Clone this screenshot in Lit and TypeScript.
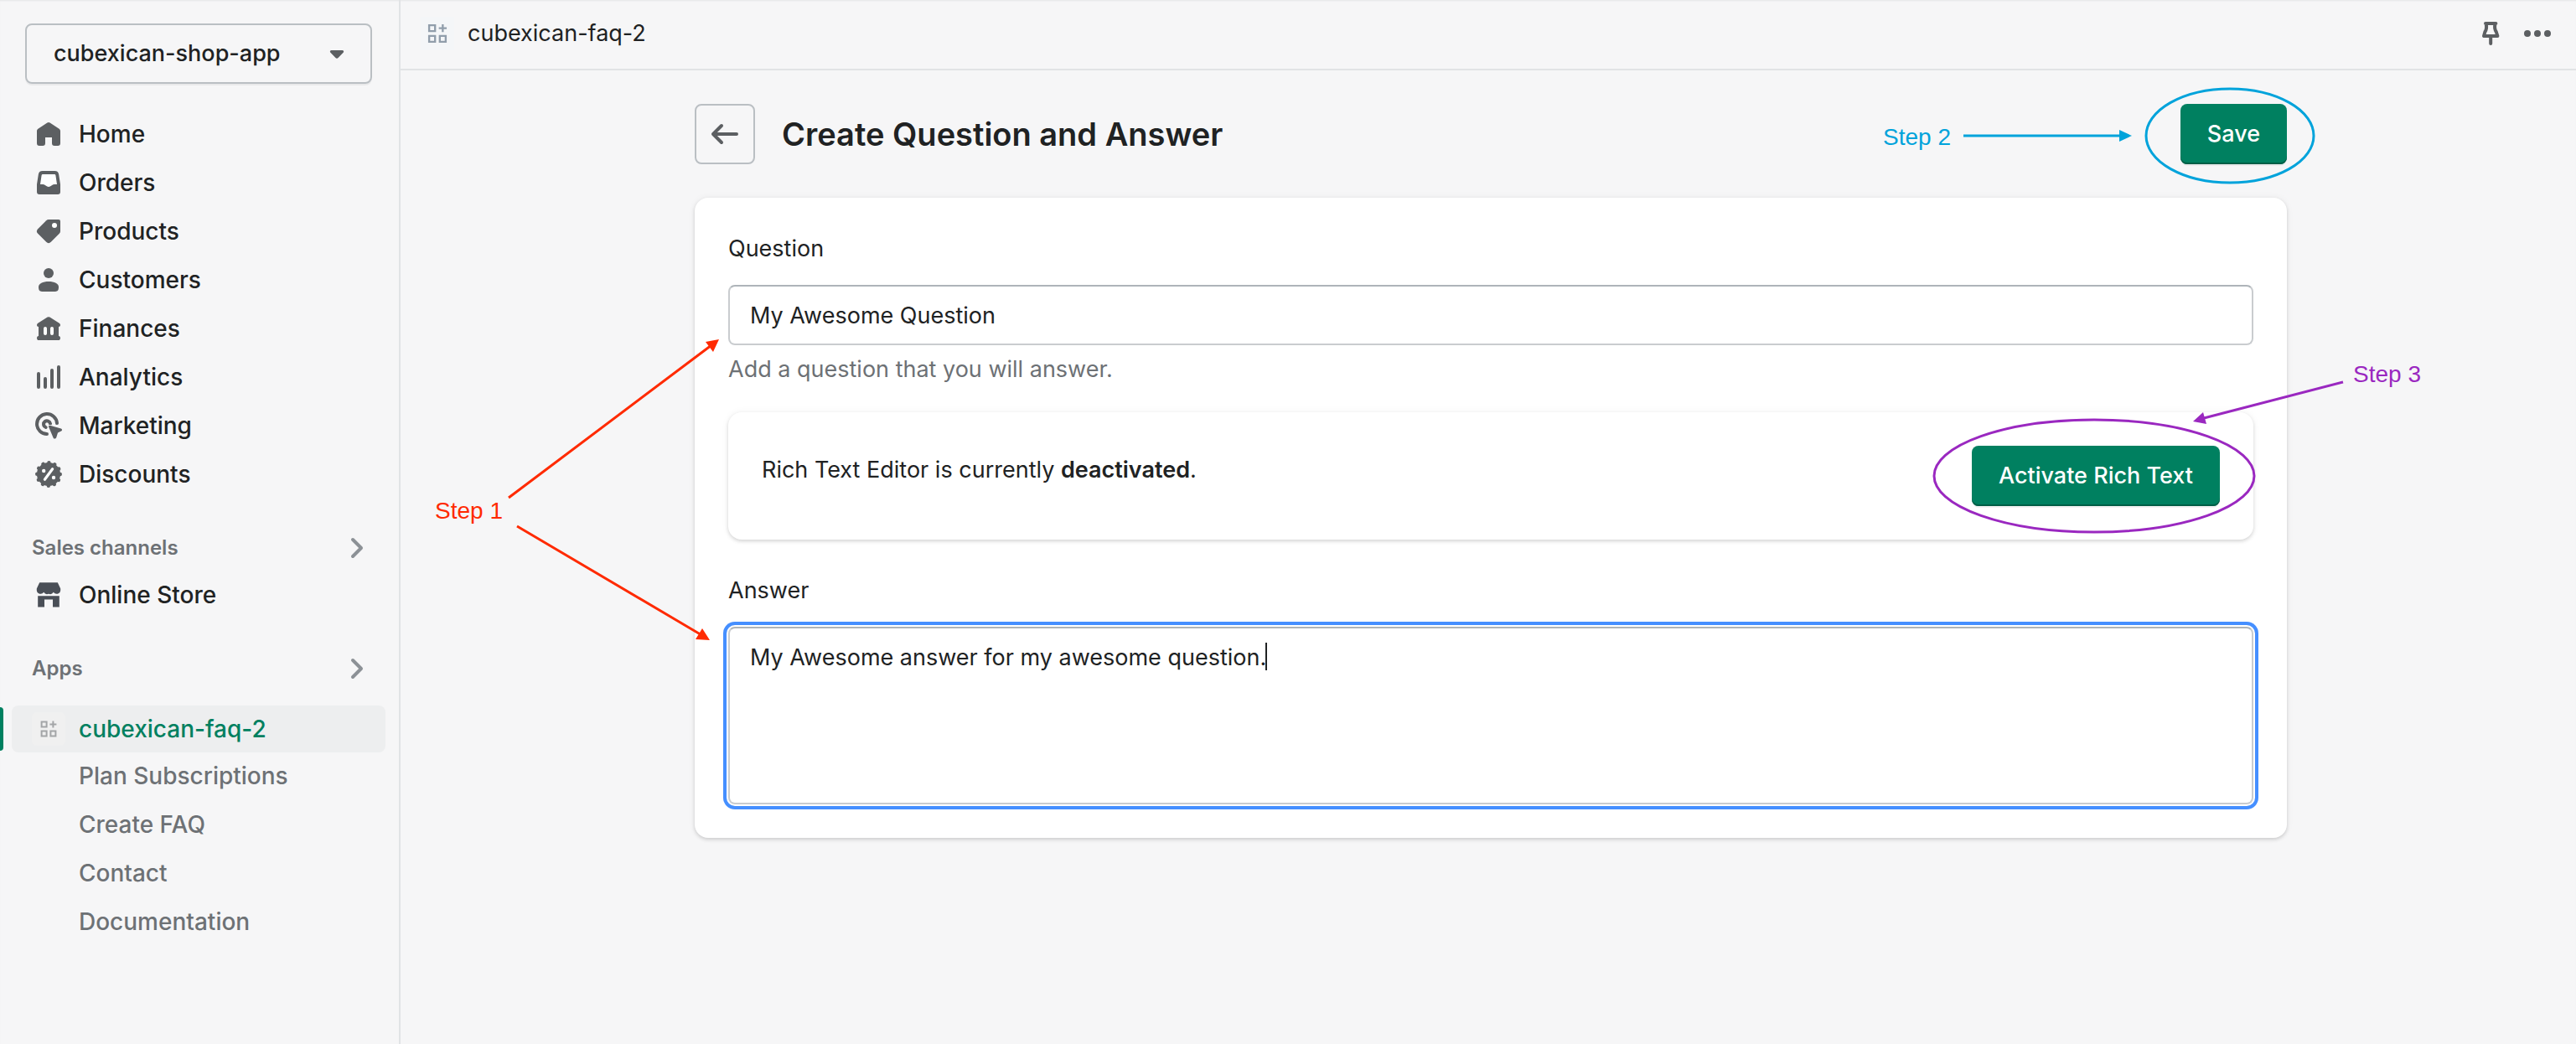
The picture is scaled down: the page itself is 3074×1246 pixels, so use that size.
import { LitElement, html, css, svg } from "lit";
import { customElement } from "lit/decorators.js";

const icons = {
  home: svg`<path d="M9.2 3.3a1.4 1.4 0 0 1 1.6 0l5.5 3.6c.4.3.7.8.7 1.3V15.500a1.500 1.500 0 0 1-1.500 1.500h-2a1.500 1.500 0 0 1-1.500-1.500V12H8v3.500A1.500 1.500 0 0 1 6.500 17h-2A1.500 1.500 0 0 1 3 15.500V8.200c0-.5.3-1 .7-1.300z"/>`,
  orders: svg`<path d="M6.400 3h7.200a2.500 2.500 0 0 1 2.500 2.200L17 11v4.500a1.500 1.500 0 0 1-1.500 1.500h-11A1.500 1.500 0 0 1 3 15.500V11l.9-5.800A2.500 2.500 0 0 1 6.400 3z"/><path fill="#fff" d="M6.500 5h7a.7.7 0 0 1 .7.600L15 11h-1.500c-.6 0-1 .2-1.400.5l-1 .6a2 2 0 0 1-2.200 0l-1-.6c-.4-.3-.8-.5-1.400-.5H5l.8-5.400a.7.7 0 0 1 .7-.6z"/>`,
  products: svg`<path d="M10 3h6a1 1 0 0 1 1 1v6c0 .5-.2 1-.6 1.400l-5 5a2 2 0 0 1-2.800 0l-5-5a2 2 0 0 1 0-2.800l5-5C9 3.200 9.500 3 10 3z"/><circle cx="13.500" cy="6.500" r="1.500" fill="#fff"/>`,
  customers: svg`<circle cx="10" cy="6" r="3"/><path d="M4 14.300C4 12.200 6.500 11 10 11s6 1.200 6 3.300C16 16.200 15.300 17 14 17H6c-1.300 0-2-.8-2-2.700z"/>`,
  finances: svg`<path d="M9.300 3.300a1.300 1.300 0 0 1 1.400 0l5.700 3.600c.4.300.6.600.6 1 0 .7-.4 1.100-1 1.100v5.500c.6 0 1 .5 1 1.200s-.4 1.300-1 1.300H4c-.6 0-1-.6-1-1.300s.4-1.200 1-1.200V9c-.6 0-1-.4-1-1.100 0-.4.200-.7.600-1z"/><path fill="none" stroke="#fff" stroke-width="2" stroke-linecap="round" d="M8 10v3M12 10v3"/>`,
  analytics: svg`<path fill="none" stroke="currentColor" stroke-width="2" stroke-linecap="round" d="M4 8v8M8 11v5M12 6v10M16 4v12"/>`,
  marketing: svg`<path fill="none" stroke="currentColor" stroke-width="2" stroke-linecap="round" d="M9 15A6 6 0 1 1 15 8.500"/><path fill="none" stroke="currentColor" stroke-width="2" stroke-linecap="round" d="M8.300 11A2 2 0 1 1 11 8.800"/><path stroke="#f6f6f7" stroke-width=".8" paint-order="stroke" d="M10.900 9.900l6.500 1.900c.8.300.8 1.200.1 1.500l-2 .9-.9 2.900c-.3.900-1.500.9-1.800.1l-2.700-6.300c-.3-.7.200-1.200.8-1z"/>`,
  discounts: svg`<circle cx="10" cy="10" r="7"/><circle cx="10" cy="10" r="6.900" fill="none" stroke="currentColor" stroke-width="2.200" stroke-linecap="round" stroke-dasharray=".01 3.602"/><path fill="none" stroke="#fff" stroke-width="1.600" stroke-linecap="round" d="M12.300 6.900l-4.600 6.200"/><circle cx="7.100" cy="8" r="1.100" fill="#fff"/><circle cx="13" cy="12" r="1.100" fill="#fff"/>`,
  store: svg`<path fill="#4a4f57" d="M4.600 2.600h10.800l1.700 3.700v1a2.300 2.300 0 0 1-4.200 1.100 2.400 2.400 0 0 1-2.900 1 2.400 2.400 0 0 1-2.900-1A2.300 2.300 0 0 1 2.900 7.300v-1z"/><path fill="#4a4f57" d="M3.600 10.600h12.800v6.600h-3.900v-4.400h-5v4.400H3.600z"/>`,
  app: svg`<path fill="none" stroke="currentColor" stroke-width="1" d="M5.800 5.800h3v3h-3zM5.800 11.200h3v3h-3zM11.200 11.200h3v3h-3zM12.700 5.300v4M10.700 7.300h4"/>`,
  chevron: svg`<path fill="none" stroke="currentColor" stroke-width="2" stroke-linecap="round" stroke-linejoin="round" d="M7.500 5l5 5-5 5"/>`,
  back: svg`<path fill="none" stroke="currentColor" stroke-width="2" stroke-linecap="round" stroke-linejoin="round" d="M17 10H3.500M8 5l-5 5 5 5"/>`,
  caret: svg`<path d="M6.800 8h6.400a.8.800 0 0 1 .6 1.400l-2.900 3a1.300 1.300 0 0 1-1.800 0l-2.900-3A.8.800 0 0 1 6.800 8z"/>`,
  pin: svg`<path fill="none" stroke="currentColor" stroke-width="2" stroke-linecap="round" stroke-linejoin="round" d="M7 4h6.200M7.300 4c.6 2.500.3 3.700-.6 5L6 11.500h8.200L13.400 9c-.9-1.300-1.200-2.500-.6-5M10.100 12v4"/>`,
  dots: svg`<circle cx="4" cy="10" r="2"/><circle cx="10" cy="10" r="2"/><circle cx="16" cy="10" r="2"/>`,
};

type IconName = keyof typeof icons;

const icon = (name: IconName) =>
  html`<svg class="icon" viewBox="0 0 20 20" aria-hidden="true">${icons[name]}</svg>`;

const mainLinks: [IconName, string][] = [
  ["home", "Home"],
  ["orders", "Orders"],
  ["products", "Products"],
  ["customers", "Customers"],
  ["finances", "Finances"],
  ["analytics", "Analytics"],
  ["marketing", "Marketing"],
  ["discounts", "Discounts"],
];

const appLinks = ["Plan Subscriptions", "Create FAQ", "Contact", "Documentation"];

@customElement("app-root")
export class AppRoot extends LitElement {
  static styles = css`
    :host {
      display: flex;
      min-height: 100vh;
      box-sizing: border-box;
      background: #f6f6f7;
      box-shadow: inset 0 2px 2px -1px #e4e5e7;
      color: #202223;
      font: 400 27px/42px Inter, "Liberation Sans", sans-serif;
    }
    *, *::before, *::after {
      box-sizing: border-box;
    }
    button, input, select, textarea {
      font: inherit;
      color: inherit;
      margin: 0;
    }
    button {
      cursor: pointer;
    }
    a {
      color: inherit;
      text-decoration: none;
    }
    .icon {
      display: block;
      flex: none;
      width: 40px;
      height: 40px;
      fill: currentColor;
      color: #5c5f62;
    }
    .sidebar {
      flex: none;
      width: 478px;
      padding-top: 28px;
      border-right: 2px solid #e1e3e5;
      font-size: 28px;
      font-weight: 500;
    }
    .store {
      display: grid;
      align-items: center;
      margin: 0 32px 32px 30px;
    }
    .store-select {
      grid-area: 1 / 1;
      width: 100%;
      height: 72px;
      padding: 0 72px 0 32px;
      appearance: none;
      background: transparent;
      border: 2px solid #babfc3;
      border-radius: 8px;
      box-shadow: 0 2px 0 rgba(0, 0, 0, 0.05);
      font-size: 27px;
    }
    .store .icon {
      grid-area: 1 / 1;
      justify-self: end;
      margin-right: 22px;
      pointer-events: none;
    }
    .list {
      display: flex;
      flex-direction: column;
      gap: 2px;
      margin: 0;
      padding: 0 16px 0 14px;
      list-style: none;
    }
    .link {
      display: flex;
      align-items: center;
      gap: 16px;
      height: 56px;
      padding-left: 24px;
      border-radius: 8px;
    }
    .current {
      position: relative;
      margin-bottom: -2px;
      background: #edeeef;
      color: #008060;
    }
    .current::before {
      content: "";
      position: absolute;
      left: -14px;
      top: 2px;
      bottom: 2px;
      width: 4px;
      background: #008060;
      border-radius: 0 6px 6px 0;
    }
    .current .icon {
      color: #a3a5a7;
      background: #f0f0f0;
      border-radius: 6px;
    }
    .sub {
      padding-left: 80px;
      color: #6d7175;
    }
    .section {
      display: flex;
      align-items: center;
      justify-content: space-between;
      width: 100%;
      height: 56px;
      margin-top: 32px;
      padding: 0 30px 0 38px;
      border: 0;
      background: none;
      color: #6d7175;
      font-size: 24px;
      font-weight: 600;
    }
    .section .icon {
      color: #8c9196;
    }
    .apps {
      margin-top: 16px;
    }
    .main {
      flex: 1;
      min-width: 0;
    }
    .topbar {
      display: flex;
      align-items: center;
      gap: 16px;
      height: 84px;
      padding: 0 26px 2px 24px;
      border-bottom: 2px solid #e1e3e5;
    }
    .topbar-title {
      flex: 1;
    }
    .topbar .brand {
      color: #919eab;
      background: #f4f6f8;
    }
    .plain {
      padding: 0;
      border: 0;
      background: none;
    }
    .content {
      padding: 40px 64px 40px 70px;
    }
    .page {
      position: relative;
      max-width: 1900px;
      margin: 0 auto;
    }
    .page-head {
      display: flex;
      align-items: center;
      gap: 32px;
      margin-bottom: 40px;
    }
    .back {
      padding: 14px;
      border: 2px solid #babfc3;
      border-radius: 8px;
      background: none;
    }
    .title {
      flex: 1;
      margin: 0;
      font-size: 38px;
      font-weight: 600;
    }
    .primary {
      height: 72px;
      padding: 0 32px;
      border: 0;
      border-radius: 8px;
      background: #008060;
      box-shadow: inset 0 -2px 0 #005e46, 0 2px 0 rgba(0, 0, 0, 0.05);
      color: #fff;
      font-weight: 500;
    }
    .card {
      padding: 40px;
      background: #fff;
      border-radius: 16px;
      box-shadow: 0 0 10px rgba(23, 24, 24, 0.05), 0 2px 4px rgba(0, 0, 0, 0.15);
    }
    .field-label {
      display: block;
      margin-bottom: 22px;
    }
    .field {
      display: block;
      width: 100%;
      border: 2px solid #c9cccf;
      border-top-color: #aeb4b9;
      border-radius: 8px;
      background: #fff;
      outline: none;
    }
    .question {
      height: 72px;
      padding: 0 24px;
    }
    .help {
      margin: 8px 0 30px;
      color: #6d7175;
    }
    .editor {
      display: flex;
      justify-content: space-between;
      margin-bottom: 40px;
    }
    .editor-text {
      margin: 8px 0 0;
    }
    .strong {
      font-weight: 600;
    }
    .answer-box {
      position: relative;
    }
    .answer {
      height: 212px;
      padding: 14px 24px;
      resize: none;
      box-shadow: 0 0 0 2px #fff, 0 0 0 6px #458fff;
    }
    .cursor {
      position: absolute;
      left: 641px;
      top: 19px;
      width: 2px;
      height: 33px;
      background: #202223;
    }
    .notes {
      position: absolute;
      top: 0;
      width: 1px;
      height: 1px;
      overflow: visible;
      pointer-events: none;
      fill: none;
      stroke-width: 3;
      font: 400 28px "Liberation Sans", sans-serif;
    }
    .notes-left {
      left: 0;
    }
    .notes-right {
      right: 0;
    }
    .red { stroke: #ff2a00; }
    .blue { stroke: #00a3db; }
    .purple { stroke: #9a28c0; }
    .solid { stroke: none; }
    .red .solid { fill: #ff2a00; }
    .blue .solid { fill: #00a3db; }
    .purple .solid { fill: #9a28c0; }
  `;

  render() {
    return html`
      <nav class="sidebar" aria-label="Admin">
        <div class="store">
          <select class="store-select" aria-label="Store">
            <option>cubexican-shop-app</option>
          </select>
          ${icon("caret")}
        </div>
        <ul class="list">
          ${mainLinks.map(
            ([name, text]) => html`<li><a class="link" href="#">${icon(name)}${text}</a></li>`,
          )}
        </ul>
        <button class="section">Sales channels ${icon("chevron")}</button>
        <ul class="list">
          <li><a class="link" href="#">${icon("store")}Online Store</a></li>
        </ul>
        <button class="section">Apps ${icon("chevron")}</button>
        <ul class="list apps">
          <li><a class="link current" href="#" aria-current="page">${icon("app")}cubexican-faq-2</a></li>
          ${appLinks.map((text) => html`<li><a class="link sub" href="#">${text}</a></li>`)}
        </ul>
      </nav>
      <div class="main">
        <header class="topbar">
          <svg class="icon brand" viewBox="1.500 1.500 17 17" aria-hidden="true">${icons.app}</svg>
          <span class="topbar-title">cubexican-faq-2</span>
          <button class="plain" aria-label="Pin">${icon("pin")}</button>
          <button class="plain" aria-label="More actions">${icon("dots")}</button>
        </header>
        <main class="content">
          <div class="page">
            <div class="page-head">
              <button class="back" aria-label="Back">${icon("back")}</button>
              <h1 class="title">Create Question and Answer</h1>
              <button class="primary">Save</button>
            </div>
            <form class="card">
              <label class="field-label" for="question">Question</label>
              <input class="field question" id="question" type="text" value="My Awesome Question" aria-describedby="help" />
              <p class="help" id="help">Add a question that you will answer.</p>
              <section class="card editor">
                <p class="editor-text">
                  Rich Text Editor is currently <b class="strong">deactivated</b>.
                </p>
                <button class="primary" type="button">Activate Rich Text</button>
              </section>
              <label class="field-label" for="answer">Answer</label>
              <div class="answer-box">
                <textarea class="field answer" id="answer" .value=${"My Awesome answer for my awesome question."}></textarea>
                <span class="cursor"></span>
              </div>
            </form>
            <svg class="notes notes-left">
              <g class="red">
                <text class="solid" x="-310" y="495">Step 1</text>
                <path d="M-222 470L20 288M-212 504L10 635" />
                <path class="solid" d="M29 281L13 284L22 296ZM18 640L9 626L1 639Z" />
              </g>
            </svg>
            <svg class="notes notes-right">
              <g class="blue">
                <text class="solid" x="-481" y="49">Step 2</text>
                <path d="M-385 38H-198" />
                <path class="solid" d="M-184 38L-199 31V45Z" />
                <ellipse cx="-67" cy="38" rx="100" ry="56" />
              </g>
              <g class="purple">
                <text class="solid" x="80" y="332">Step 3</text>
                <path d="M68 332L-98 375" />
                <path class="solid" d="M-111 379L-99 368L-95 382Z" />
                <ellipse cx="-229" cy="444" rx="191" ry="67" />
              </g>
            </svg>
          </div>
        </main>
      </div>
    `;
  }
}
